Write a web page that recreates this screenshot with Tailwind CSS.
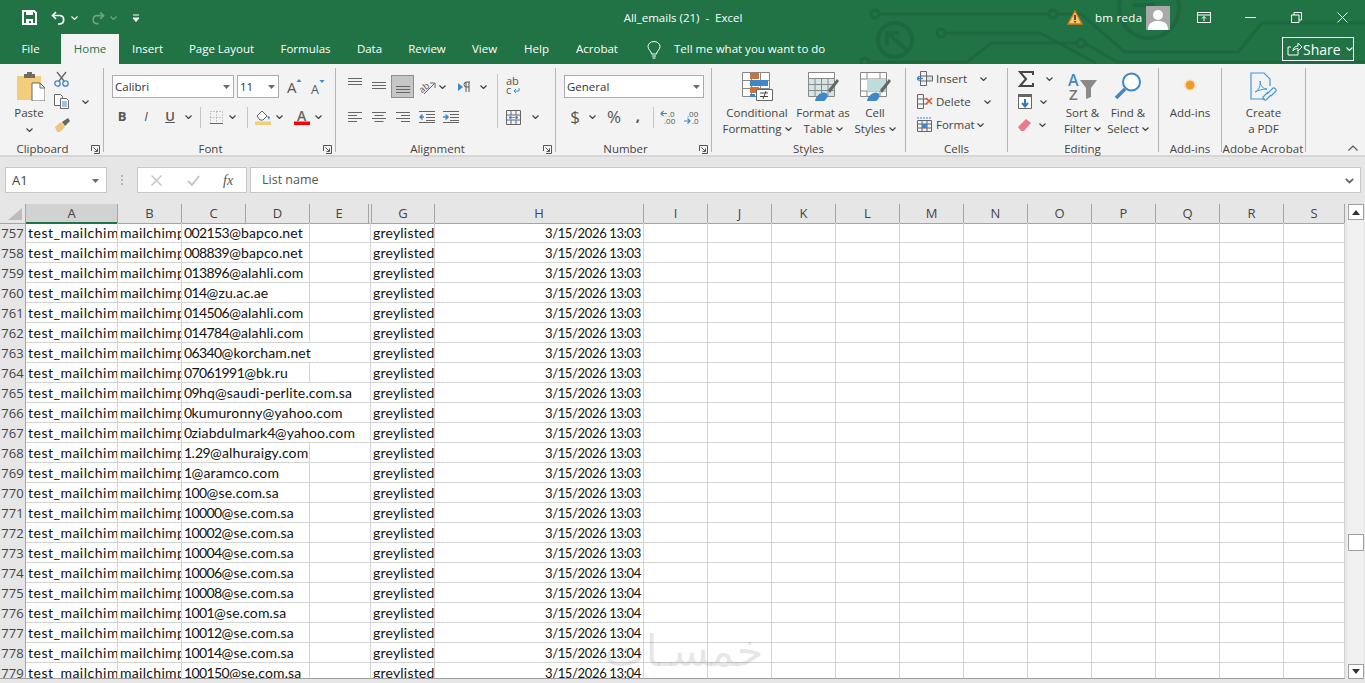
<!DOCTYPE html>
<html lang="en">
<head>
  <meta charset="UTF-8" />
  <title>All_emails (21) - Excel</title>
  <script src="https://cdn.jsdelivr.net/npm/@tailwindcss/browser@4"></script>
</head>
<body class="w-[1365px] h-[683px] overflow-hidden bg-[#e6e6e6] font-['Open_Sans',sans-serif] text-[11.5px] text-[#444]">

  <svg class="hidden">
    <symbol id="chev" viewBox="0 0 7 4"><path d="M.5.5l3 3 3-3" fill="none" stroke="currentColor" stroke-width="1.2"/></symbol>
    <symbol id="launch" viewBox="0 0 9 9"><path d="M.5 6V.5h8v8H3M2.5 2.5l4 4M6.5 3.5v3h-3" fill="none" stroke="#555"/></symbol>
    <symbol id="drop" viewBox="0 0 7 4"><path d="M0 0h7L3.5 4z" fill="#6a6a6a"/></symbol>
  </svg>

  <!-- titlebar + tabs -->
  <div class="relative h-[64px] bg-[#217346] text-white">
    <svg class="absolute left-0 top-0" width="1365" height="64" fill="none" stroke="#1d6840" stroke-width="3">
      <circle cx="875" cy="14" r="4"/><path d="M879 14h170"/><circle cx="1053" cy="14" r="4"/>
      <path d="M1057 14h24l38 33 6 5h113l24-29h103"/>
      <circle cx="895" cy="40" r="17" stroke-width="4"/><path d="M906 50L888 33M887 45V33h12" stroke-width="4"/>
      <circle cx="941" cy="33" r="4"/><path d="M945 33h95l56 30"/>
      <circle cx="865" cy="62" r="4"/><path d="M869 62h98l24-19h86"/><circle cx="1081" cy="43" r="4"/>
      <path d="M1085 43l32 19h248"/>
      <circle cx="1149" cy="8" r="30" stroke-width="4"/><path d="M1133 5h22" stroke-width="4"/>
    </svg>

    <div class="relative grid grid-cols-[553px_260px_552px] h-[35px] items-center">
      <div class="flex items-center h-full">
        <span class="w-[22px]"></span>
        <svg class="w-[15px] h-[15px]" viewBox="0 0 15 15"><path d="M1 1h11l2 2v11H1z" fill="none" stroke="#fff" stroke-width="2"/><path d="M4 1h7v4H4zM4 9h7v5H9v-3H7v3H4z" fill="#fff"/></svg>
        <svg class="ml-[14px] w-[16px] h-[14px]" viewBox="0 0 16 14"><path d="M5 1L1.5 4.5 5 8M2 4.5h7a4.3 4.3 0 010 8.5H7" fill="none" stroke="#fff" stroke-width="1.7"/></svg>
        <svg class="ml-[4px] w-[7px] h-[4px]"><use href="#chev"/></svg>
        <svg class="ml-[12px] w-[15px] h-[14px]" viewBox="0 0 16 14"><path d="M11 1l3.500 3.500L11 8M14 4.5H7a4.3 4.3 0 000 8.5h2" fill="none" stroke="#6da488" stroke-width="1.7"/></svg>
        <svg class="ml-[5px] w-[7px] h-[4px] text-[#6da488]"><use href="#chev"/></svg>
        <svg class="ml-[15px] w-[8px] h-[8px]" viewBox="0 0 8 8"><path d="M1 1h6M1 4h6L4 7.5z" fill="#fff" stroke="#fff"/></svg>
      </div>
      <div class="text-center whitespace-pre">All_emails (21)  -  Excel</div>
      <div class="flex items-center h-full">
        <svg class="ml-[254px] w-[16px] h-[15px]" viewBox="0 0 16 15"><path d="M8 1l7 13H1z" fill="#f6c667" stroke="#d9761c" stroke-width="1.3"/><path d="M7.2 5h1.6v5H7.2zM7.2 11h1.6v1.5H7.2z" fill="#333"/></svg>
        <span class="ml-[12px] w-[51px] tracking-[.3px]">bm reda</span>
        <svg class="w-[24px] h-[24px]" viewBox="0 0 24 24"><path d="M0 0h24v24H0z" fill="#a9a9a9"/><circle cx="12" cy="9" r="5" fill="#fff"/><path d="M2 24c0-7 4-9 10-9s10 2 10 9z" fill="#fff"/></svg>
        <svg class="ml-[27px] w-[14px] h-[11px]" viewBox="0 0 14 11"><path d="M.5.5h13v10H.5zM.5 3h13M7 9V4.5M5 6.5L7 4.5l2 2" fill="none" stroke="#fff"/></svg>
        <span class="ml-[34px] w-[11px] h-px bg-white"></span>
        <svg class="ml-[35px] w-[11px] h-[11px]" viewBox="0 0 11 11"><path d="M.5 3h7.5v7.5H.5zM3 3V.5h7.5V8H8" fill="none" stroke="#fff"/></svg>
        <svg class="ml-[35px] w-[11px] h-[11px]" viewBox="0 0 11 11"><path d="M.5.5l10 10M10.5.5l-10 10" fill="none" stroke="#fff"/></svg>
      </div>
    </div>

    <div class="relative flex h-[29px] items-center">
      <div class="w-[61px] text-center -mt-[1px]">File</div>
      <div class="w-[58px] h-[30px] -mt-[1px] bg-[#f3f3f3] text-[#217346] flex items-center justify-center">Home</div>
      <div class="w-[57px] text-center -mt-[1px]">Insert</div>
      <div class="w-[91px] text-center -mt-[1px]">Page Layout</div>
      <div class="w-[77px] text-center -mt-[1px]">Formulas</div>
      <div class="w-[51px] text-center -mt-[1px]">Data</div>
      <div class="w-[64px] text-center -mt-[1px]">Review</div>
      <div class="w-[51px] text-center -mt-[1px]">View</div>
      <div class="w-[53px] text-center -mt-[1px]">Help</div>
      <div class="w-[68px] text-center -mt-[1px]">Acrobat</div>
      <svg class="ml-[16px] w-[14px] h-[18px]" viewBox="0 0 14 18"><path d="M4.5 13c0-3-3.500-4-3.500-7.5a6 5 0 0112 0C13 9 9.500 10 9.500 13zM5 15h4M5.5 17h3" fill="none" stroke="#fff"/></svg>
      <span class="ml-[13px] w-[600px] -mt-[1px]">Tell me what you want to do</span>
      <div class="absolute left-[1282px] top-[2px] w-[72px] h-[24px] border border-white flex items-center pl-[4px] text-[14px]">
        <svg class="flex-none w-[15px] h-[14px]" viewBox="0 0 15 14"><path d="M11 8v5H1V5h3M6 9c0-3 2-5 5-5V1l4 4-4 4V6.5C9 6.5 7 7 6 9z" fill="none" stroke="#fff"/></svg>
        <span class="ml-[1px]">Share</span>
        <svg class="ml-[5px] w-[7px] h-[4px]"><use href="#chev"/></svg>
      </div>
    </div>
  </div>

  <!-- ribbon -->
  <div class="flex h-[93px] pt-[4px] bg-[#f3f3f3] border-b-2 border-[#d6d6d6]">

    <!-- clipboard -->
    <div class="w-[104px] h-[84px] flex-none border-r border-[#b4b4b4]">
      <div class="flex h-[74px]">
        <div class="ml-[4px] w-[50px] flex flex-col items-center">
          <div class="h-[37px] pt-[4px] pl-[4px]">
            <svg width="28" height="29" viewBox="0 0 28 29"><path d="M0 4h24v24H0z" fill="#f2cd7a"/><path d="M7 2h3V0h5v2h3v4H7z" fill="#6b6b6b"/><path d="M15 11h8l5 5v13H15z" fill="#fff" stroke="#666"/><path d="M23 11v5h5" fill="none" stroke="#666"/></svg>
          </div>
          <div class="leading-[16px]">Paste</div>
          <svg class="mt-[7px] w-[7px] h-[4px]"><use href="#chev"/></svg>
        </div>
        <div class="-mt-[1px]">
          <div class="h-[23px] flex items-center">
            <svg width="15" height="16" viewBox="0 0 15 16"><path d="M3 1l7 9M12 1L5 10" stroke="#666" stroke-width="1.3"/><circle cx="3.5" cy="12.5" r="2.7" fill="none" stroke="#3f87c7" stroke-width="1.3"/><circle cx="11.5" cy="12.5" r="2.7" fill="none" stroke="#3f87c7" stroke-width="1.3"/></svg>
          </div>
          <div class="h-[23px] flex items-center">
            <svg width="15" height="15" viewBox="0 0 15 15"><path d="M.5.5h6l2 2v9h-8z" fill="#fff" stroke="#666"/><path d="M6.5 4.5h6l2 2v8h-8z" fill="#fff" stroke="#666"/><path d="M8 8h5M8 10h5M8 12h5" stroke="#3f87c7"/></svg>
            <svg class="ml-[13px] w-[7px] h-[4px]"><use href="#chev"/></svg>
          </div>
          <div class="h-[23px] flex items-center">
            <svg width="17" height="14" viewBox="0 0 17 14"><path d="M1 9l6-5 4 5-5 5H3z" fill="#f0c27b"/><path d="M8 4l6-4 2 3-5 5z" fill="#666"/></svg>
          </div>
        </div>
      </div>
      <div class="relative h-[14px] leading-[13px] text-center pr-[18px]">Clipboard<svg class="absolute right-[3px] top-[3px] w-[9px] h-[9px]"><use href="#launch"/></svg></div>
    </div>

    <!-- font -->
    <div class="w-[232px] h-[84px] flex-none border-r border-[#b4b4b4]">
      <div class="h-[74px] pl-[8px] pt-[7px]">
        <div class="flex items-center h-[23px]">
          <div class="w-[122px] h-[23px] bg-white border border-[#ababab] flex items-center justify-between pl-[2px] pr-[3px] text-[#333]">Calibri<svg class="w-[7px] h-[4px]"><use href="#drop"/></svg></div>
          <div class="ml-[3px] w-[42px] h-[23px] bg-white border border-[#ababab] flex items-center justify-between pl-[2px] pr-[3px] text-[#333]">11<svg class="w-[7px] h-[4px]"><use href="#drop"/></svg></div>
          <svg class="ml-[8px] w-[15px] h-[15px] overflow-visible" viewBox="0 0 15 15"><text x="0" y="14" font-family="Open Sans" font-size="15" fill="#555">A</text><path d="M9.5 3l2.500-3 2.500 3z" fill="#3f87c7"/></svg>
          <svg class="ml-[8px] w-[15px] h-[14px] overflow-visible" viewBox="0 0 15 14"><text x="1" y="14" font-family="Open Sans" font-size="12.5" fill="#555">A</text><path d="M9.5 0h5L12 3z" fill="#3f87c7"/></svg>
        </div>
        <div class="flex items-center h-[24px] mt-[7px] -ml-[2px]">
          <div class="w-[24px] text-center font-bold text-[13px] text-[#555]">B</div>
          <div class="w-[24px] text-center italic text-[13px] text-[#555]">I</div>
          <div class="w-[24px] text-center font-semibold text-[13px] text-[#555] underline">U</div>
          <div class="w-[12px] flex justify-center"><svg class="w-[7px] h-[4px]"><use href="#chev"/></svg></div>
          <div class="w-[13px] flex justify-center"><span class="w-px h-[21px] bg-[#c6c6c6]"></span></div>
          <div class="w-[18px] flex justify-center"><svg width="13" height="13" viewBox="0 0 13 13"><path d="M.5.5h12v12H.5zM6.5.5v12M.5 6.5h12" fill="none" stroke="#999" stroke-dasharray="1 2"/><path d="M0 12.5h13" stroke="#666"/></svg></div>
          <div class="w-[15px] flex justify-center"><svg class="w-[7px] h-[4px]"><use href="#chev"/></svg></div>
          <div class="w-[14px] flex justify-center"><span class="w-px h-[21px] bg-[#c6c6c6]"></span></div>
          <div class="w-[18px] flex justify-center"><svg width="16" height="15" viewBox="0 0 16 15"><path d="M2 6l5-5 5 5-4 4H5z" fill="#fff" stroke="#666"/><path d="M12 6l3 1-1 3z" fill="#3f87c7"/><path d="M0 11.5h16V15H0z" fill="#f0cf7a"/></svg></div>
          <div class="w-[14px] flex justify-center"><svg class="w-[7px] h-[4px]"><use href="#chev"/></svg></div>
          <div class="ml-[6px] w-[20px] flex justify-center"><svg class="overflow-visible" width="16" height="15" viewBox="0 0 16 15"><text x="3" y="11" font-family="Open Sans" font-weight="600" font-size="14" fill="#666">A</text><path d="M0 11.5h16V15H0z" fill="#f00"/></svg></div>
          <div class="w-[13px] flex justify-center"><svg class="w-[7px] h-[4px]"><use href="#chev"/></svg></div>
        </div>
      </div>
      <div class="relative h-[14px] leading-[13px] text-center pr-[18px]">Font<svg class="absolute right-[3px] top-[3px] w-[9px] h-[9px]"><use href="#launch"/></svg></div>
    </div>

    <!-- alignment -->
    <div class="w-[220px] h-[84px] flex-none border-r border-[#b4b4b4]">
      <div class="h-[74px] pl-[7px] pt-[7px] flex">
        <div class="w-[150px]">
          <div class="flex items-center h-[23px]">
            <div class="w-[24px] h-full pt-[3px] flex justify-center"><svg width="14" height="8"><path d="M0 .5h14M0 3.5h14M0 6.5h14" stroke="#666"/></svg></div>
            <div class="w-[24px] h-full pt-[7px] flex justify-center"><svg width="14" height="8"><path d="M0 .5h14M0 3.5h14M0 6.5h14" stroke="#666"/></svg></div>
            <div class="w-[23px] h-[23px] bg-[#c6c6c6] border border-[#8f8f8f] flex items-end justify-center pb-[3px]"><svg width="14" height="8"><path d="M0 .5h14M0 3.5h14M0 6.5h14" stroke="#666"/></svg></div>
            <div class="ml-[1px] w-[24px] flex justify-center"><svg class="overflow-visible" width="18" height="16" viewBox="0 0 18 16"><text x="1" y="12" transform="rotate(-40 6 9)" font-family="Open Sans" font-size="9" fill="#555">ab</text><path d="M6 15L16 5M12 4h5v5" fill="none" stroke="#666"/></svg></div>
            <div class="w-[13px] -ml-[3px] flex justify-center"><svg class="w-[7px] h-[4px]"><use href="#chev"/></svg></div>
            <div class="ml-[6px] w-[20px] flex justify-center"><svg width="14" height="12" viewBox="0 0 14 12"><path d="M0 2l5 4-5 4z" fill="#3f87c7"/><path d="M8 1v10M11 1v10M12 1H8.5a2.5 2.5 0 000 5H11" fill="none" stroke="#555"/></svg></div>
            <div class="ml-[2px] w-[12px] flex justify-center"><svg class="w-[7px] h-[4px]"><use href="#chev"/></svg></div>
          </div>
          <div class="flex items-center h-[24px] mt-[7px]">
            <div class="w-[24px] flex justify-center"><svg width="14" height="10"><path d="M0 .5h14M0 3.5h9M0 6.5h14M0 9.5h9" stroke="#666"/></svg></div>
            <div class="w-[24px] flex justify-center"><svg width="14" height="10"><path d="M0 .5h14M2.5 3.5h9M0 6.5h14M2.5 9.5h9" stroke="#666"/></svg></div>
            <div class="w-[24px] flex justify-center"><svg width="14" height="10"><path d="M0 .5h14M5 3.5h9M0 6.5h14M5 9.5h9" stroke="#666"/></svg></div>
            <div class="w-[24px] flex justify-center"><svg width="16" height="12"><path d="M0 .5h16M7 3.5h9M7 6.5h9M0 11.5h16M7 9.5h9" stroke="#666"/><path d="M5 6H1M3.5 3.5L1 6l2.500 2.500" fill="none" stroke="#3f87c7" stroke-width="1.5"/></svg></div>
            <div class="w-[24px] flex justify-center"><svg width="16" height="12"><path d="M0 .5h16M7 3.5h9M7 6.5h9M0 11.5h16M7 9.5h9" stroke="#666"/><path d="M0 6h4.500M2.5 3.5L5 6 2.5 8.5" fill="none" stroke="#3f87c7" stroke-width="1.5"/></svg></div>
          </div>
        </div>
        <span class="mt-[-1px] w-px h-[54px] bg-[#c6c6c6] ml-[4px]"></span>
        <div class="ml-[8px]">
          <div class="h-[23px] flex items-center -mt-[1px]"><svg class="overflow-visible" width="16" height="18" viewBox="0 0 16 18"><text x="0" y="8" font-family="Open Sans" font-size="11" fill="#555">ab</text><text x="0" y="17" font-family="Open Sans" font-size="11" fill="#555">c</text><path d="M13 11v3H8M10 12l-2 2 2 2" fill="none" stroke="#3f87c7"/></svg></div>
          <div class="h-[24px] flex items-center mt-[8px]">
            <svg width="15" height="15" viewBox="0 0 15 15"><path d="M.5.5h14v14H.5zM.5 5h14M.5 10h14M5 .5V5M10 .5V5M5 10v4.500M10 10v4.500" fill="none" stroke="#666"/><path d="M3 7.5h9M3 7.5l2-1.500v3zM12 7.5l-2-1.500v3z" fill="#3f87c7" stroke="#3f87c7" stroke-width=".8"/></svg>
            <svg class="ml-[11px] w-[7px] h-[4px]"><use href="#chev"/></svg>
          </div>
        </div>
      </div>
      <div class="relative h-[14px] leading-[13px] text-center -ml-[16px]">Alignment<svg class="absolute right-[3px] top-[3px] w-[9px] h-[9px]"><use href="#launch"/></svg></div>
    </div>

    <!-- number -->
    <div class="w-[156px] h-[84px] flex-none border-r border-[#b4b4b4]">
      <div class="h-[74px] pl-[8px] pt-[7px]">
        <div class="w-[140px] h-[23px] bg-white border border-[#ababab] flex items-center justify-between pl-[2px] pr-[3px] text-[#333]">General<svg class="w-[7px] h-[4px]"><use href="#drop"/></svg></div>
        <div class="flex items-center h-[24px] mt-[7px]">
          <div class="w-[22px] text-center text-[17px] text-[#555]">$</div>
          <div class="w-[12px] flex justify-center"><svg class="w-[7px] h-[4px]"><use href="#chev"/></svg></div>
          <div class="w-[32px] text-center text-[17px] text-[#555]">%</div>
          <div class="w-[16px] text-center text-[15px] font-bold text-[#555] -mt-[4px]">,</div>
          <div class="w-[14px] flex justify-center"><span class="w-px h-[21px] bg-[#c6c6c6]"></span></div>
          <div class="w-[18px] flex justify-center"><svg class="overflow-visible" width="16" height="15" viewBox="0 0 16 15"><path d="M0 3.5h6M2.5 1L0 3.5 2.5 6" fill="none" stroke="#3f87c7" stroke-width="1.2"/><text x="7" y="7" font-family="Open Sans" font-size="8" fill="#555">.0</text><text x="3" y="14" font-family="Open Sans" font-size="8" fill="#555">.00</text></svg></div>
          <div class="ml-[4px] w-[20px] flex justify-center"><svg class="overflow-visible" width="16" height="15" viewBox="0 0 16 15"><text x="3" y="7" font-family="Open Sans" font-size="8" fill="#555">.00</text><text x="8" y="14" font-family="Open Sans" font-size="8" fill="#555">.0</text><path d="M0 11h6M3.5 8.5L6 11l-2.500 2.500" fill="none" stroke="#3f87c7" stroke-width="1.2"/></svg></div>
        </div>
      </div>
      <div class="relative h-[14px] leading-[13px] text-center -ml-[16px]">Number<svg class="absolute right-[3px] top-[3px] w-[9px] h-[9px]"><use href="#launch"/></svg></div>
    </div>

    <!-- styles -->
    <div class="w-[194px] h-[84px] flex-none border-r border-[#b4b4b4]">
      <div class="h-[74px] pl-[8px] flex text-center leading-[16px]">
        <div class="w-[74px] flex flex-col items-center">
          <div class="h-[37px] pt-[4px]"><svg width="31" height="29" viewBox="0 0 31 29"><path d="M.5.5h27v24H.5zM9.5.5v24M18.5.5v24M.5 8.5h27M.5 16.5h27" fill="#fff" stroke="#888"/><path d="M8 1h9v6H8z" fill="#c8743c"/><path d="M8 8h18v6H8z" fill="#3f87c7"/><path d="M8 15h9v6H8z" fill="#c8743c"/><path d="M8 22h5v3H8z" fill="#3f87c7"/><path d="M14.5 17.5h16v11h-16z" fill="#fff" stroke="#666"/><path d="M18 21h8M18 24.5h8M24 19l-3 8" stroke="#444"/></svg></div>
          <div>Conditional</div>
          <div class="flex items-center whitespace-nowrap">Formatting<svg class="ml-[3px] w-[7px] h-[4px]"><use href="#chev"/></svg></div>
        </div>
        <div class="w-[58px] flex flex-col items-center whitespace-nowrap">
          <div class="h-[37px] pt-[4px]"><svg width="31" height="29" viewBox="0 0 31 29"><path d="M.5.5h26v24H.5zM.5 6.5h26M.5 12.5h26M.5 18.5h26M7 .5v24M13.5.5v24M20 .5v24" fill="#d3e5e5" stroke="#888"/><path d="M.5.5h26v6H.5z" fill="#fff" stroke="#888"/><path d="M20 18L29 7l2 2-9 12z" fill="#666"/><path d="M7 29c1-6 7-10 11-8 3 2 1 6-2 8z" fill="#3f87c7"/></svg></div>
          <div>Format as</div>
          <div class="flex items-center">Table<svg class="ml-[3px] w-[7px] h-[4px]"><use href="#chev"/></svg></div>
        </div>
        <div class="w-[46px] flex flex-col items-center whitespace-nowrap">
          <div class="h-[37px] pt-[4px]"><svg width="31" height="29" viewBox="0 0 31 29"><path d="M.5.5h26v24H.5zM.5 7h26M.5 19h26M7 .5V7M7 19v5.500M20 .5V7M20 19v5.500" fill="#fff" stroke="#888"/><path d="M7 7h19v12H7z" fill="#bedcdc"/><path d="M20 18L29 7l2 2-9 12z" fill="#666"/><path d="M7 29c1-6 7-10 11-8 3 2 1 6-2 8z" fill="#3f87c7"/></svg></div>
          <div>Cell</div>
          <div class="flex items-center">Styles<svg class="ml-[3px] w-[7px] h-[4px]"><use href="#chev"/></svg></div>
        </div>
      </div>
      <div class="h-[14px] leading-[13px] text-center">Styles</div>
    </div>

    <!-- cells -->
    <div class="w-[102px] h-[84px] flex-none border-r border-[#b4b4b4]">
      <div class="h-[75px] pl-[11px] -mt-[1px]">
        <div class="h-[23px] flex items-center">
          <svg class="w-[19px] flex-none" height="15" viewBox="0 0 19 15"><path d="M3.5.5h6v14h-6zM3.5 5h6M3.5 10h6" fill="none" stroke="#666"/><path d="M9.5 5h6v5h-6z" fill="#cfe0ea" stroke="#666"/><path d="M0 7.5h6M0 7.5L2.5 5M0 7.5L2.5 10" fill="none" stroke="#3f87c7" stroke-width="1.3"/></svg>
          <span class="w-[44px]">Insert</span><svg class="w-[7px] h-[4px]"><use href="#chev"/></svg>
        </div>
        <div class="h-[23px] flex items-center">
          <svg class="w-[19px] flex-none" height="15" viewBox="0 0 19 15"><path d="M.5.5h6v14h-6zM.5 5h6M.5 10h6M6.5 5h4M6.5 10h4" fill="none" stroke="#666"/><path d="M9 4l6 6M15 4l-6 6" stroke="#d9532c" stroke-width="1.5"/></svg>
          <span class="w-[48px]">Delete</span><svg class="w-[7px] h-[4px]"><use href="#chev"/></svg>
        </div>
        <div class="h-[23px] flex items-center">
          <svg class="w-[19px] flex-none" height="15" viewBox="0 0 19 15"><path d="M.5 3.5h14v11H.5zM.5 7h14M.5 11h14M5 3.5v11M10 3.5v11" fill="none" stroke="#666"/><path d="M5 7h5v4H5z" fill="#3f87c7"/><path d="M0 1h15" stroke="#3f87c7" stroke-dasharray="2 1"/></svg>
          <span class="w-[41px]">Format</span><svg class="w-[7px] h-[4px]"><use href="#chev"/></svg>
        </div>
      </div>
      <div class="h-[14px] leading-[13px] text-center">Cells</div>
    </div>

    <!-- editing -->
    <div class="w-[151px] h-[84px] flex-none border-r border-[#b4b4b4]">
      <div class="h-[74px] flex leading-[16px] text-center">
        <div class="w-[52px] pl-[10px] -mt-[1px]">
          <div class="h-[23px] flex items-center">
            <svg class="flex-none" width="16" height="16" viewBox="0 0 16 16"><path d="M15 4V1H2l6 7-6 7h13v-3" fill="none" stroke="#444" stroke-width="2"/></svg>
            <svg class="ml-[12px] w-[7px] h-[4px]"><use href="#chev"/></svg>
          </div>
          <div class="h-[23px] flex items-center">
            <svg class="flex-none" width="14" height="15" viewBox="0 0 14 15"><path d="M.5.5h13v14H.5z" fill="#fff" stroke="#666"/><path d="M0 0h14v3H0z" fill="#666"/><path d="M7 5v7M4 9l3 3.500L10 9" fill="none" stroke="#2f7cc0" stroke-width="2"/></svg>
            <svg class="ml-[8px] w-[7px] h-[4px]"><use href="#chev"/></svg>
          </div>
          <div class="h-[23px] flex items-center">
            <svg class="flex-none" width="13" height="12" viewBox="0 0 13 12"><path d="M0 8l8-8 5 4-7 8H3z" fill="#e97b8b"/></svg>
            <svg class="ml-[8px] w-[7px] h-[4px]"><use href="#chev"/></svg>
          </div>
        </div>
        <div class="w-[45px] flex flex-col items-center whitespace-nowrap">
          <div class="h-[37px] pt-[4px]"><svg class="overflow-visible" width="29" height="30" viewBox="0 0 29 30"><text x="0" y="14" font-family="Open Sans" font-weight="600" font-size="16" fill="#3f87c7">A</text><text x="1" y="28" font-family="Open Sans" font-weight="600" font-size="15" fill="#777">Z</text><path d="M12 8h17l-6 8v9l-5 2V16z" fill="#8a8a8a"/></svg></div>
          <div>Sort &amp;</div>
          <div class="flex items-center">Filter<svg class="ml-[3px] w-[7px] h-[4px]"><use href="#chev"/></svg></div>
        </div>
        <div class="w-[46px] flex flex-col items-center whitespace-nowrap">
          <div class="h-[37px] pt-[4px]"><svg width="28" height="28" viewBox="0 0 28 28"><circle cx="17.5" cy="10" r="8.5" fill="#fff" stroke="#3f87c7" stroke-width="2"/><path d="M11 17L2 26" stroke="#3f87c7" stroke-width="3.5"/></svg></div>
          <div>Find &amp;</div>
          <div class="flex items-center">Select<svg class="ml-[3px] w-[7px] h-[4px]"><use href="#chev"/></svg></div>
        </div>
      </div>
      <div class="h-[14px] leading-[13px] text-center -ml-[1px]">Editing</div>
    </div>

    <!-- add-ins -->
    <div class="w-[63px] h-[84px] flex-none border-r border-[#b4b4b4]">
      <div class="h-[74px] flex flex-col items-center leading-[16px]">
        <div class="h-[37px] pt-[10px]"><svg width="14" height="14"><circle cx="7" cy="7" r="6.5" fill="#fbe9c9"/><circle cx="7" cy="7" r="4.5" fill="#ec9a34"/></svg></div>
        <div class="whitespace-nowrap">Add-ins</div>
      </div>
      <div class="h-[14px] leading-[13px] text-center">Add-ins</div>
    </div>

    <!-- acrobat -->
    <div class="w-[84px] h-[84px] flex-none border-r border-[#b4b4b4]">
      <div class="h-[74px] flex flex-col items-center leading-[16px]">
        <div class="h-[37px] pt-[4px]"><svg width="27" height="30" viewBox="0 0 27 30"><path d="M15 27H1V1h13l6 6v7" fill="none" stroke="#3f9ad6" stroke-width="1.2"/><path d="M5 20c4-2 6-7 5-11 0 5 4 8 7 8-4 0-8 1-12 3z" fill="none" stroke="#3f9ad6"/><path d="M17 22l6-6a2.5 2.5 0 013 3l-5 5M21 23l-5 5a2.5 2.5 0 01-3-3l5-5" fill="none" stroke="#3f9ad6" stroke-width="1.2"/></svg></div>
        <div>Create</div>
        <div>a PDF</div>
      </div>
      <div class="h-[14px] leading-[13px] text-center whitespace-nowrap tracking-[.1px] -ml-[1px]">Adobe Acrobat</div>
    </div>

    <div class="flex-1 h-[84px] flex items-end justify-end pr-[7px] pb-[1px]">
      <svg width="10" height="6" viewBox="0 0 10 6"><path d="M.5 5.5L5 1l4.500 4.500" fill="none" stroke="#555" stroke-width="1.2"/></svg>
    </div>
  </div>

  <!-- formula bar -->
  <div class="flex h-[47px] pt-[10px] pl-[5px] items-start">
    <div class="w-[102px] h-[26px] pt-[1px] bg-white border border-[#c6c6c6] flex items-center justify-between pl-[6px] pr-[7px] text-[13px]">A1<svg class="w-[7px] h-[4px]"><use href="#drop"/></svg></div>
    <div class="w-[30px] h-[26px] flex flex-col items-center justify-center gap-[2px]">
      <span class="w-[2px] h-[2px] bg-[#b4b4b4]"></span><span class="w-[2px] h-[2px] bg-[#b4b4b4]"></span><span class="w-[2px] h-[2px] bg-[#b4b4b4]"></span>
    </div>
    <div class="w-[110px] h-[26px] bg-white border border-[#c6c6c6] flex items-center">
      <svg class="ml-[13px] w-[11px] h-[11px]" viewBox="0 0 11 11"><path d="M.5.5l10 10M10.5.5l-10 10" stroke="#c6c6c6" stroke-width="1.5"/></svg>
      <svg class="ml-[25px] w-[13px] h-[11px]" viewBox="0 0 13 11"><path d="M1 6l4 4 7-9" fill="none" stroke="#c6c6c6" stroke-width="2"/></svg>
      <span class="ml-[23px] font-['Liberation_Serif',serif] italic text-[14px] text-[#555]">fx</span>
    </div>
    <div class="ml-[3px] w-[1111px] h-[26px] pt-[1px] bg-white border border-[#c6c6c6] flex items-center justify-between pl-[11px] pr-[6px] text-[12.5px] text-[#555]">
      List name
      <svg width="9" height="6" viewBox="0 0 9 6"><path d="M.8.8l3.700 3.700L8.200.8" fill="none" stroke="#666" stroke-width="1.8"/></svg>
    </div>
  </div>

  <!-- sheet -->
  <div class="relative flex h-[479px] items-start">
    <div class="w-[1345px] flex-none">
      <div id="colHead" class="grid grid-cols-[26px_92px_64px_64px_64px_61px_64px_209px_repeat(10,64px)_61px] h-[19px] text-[13px] leading-[18px] text-center text-[#444]"></div>
      <div id="rows" class="h-[456px] overflow-hidden bg-white border-b border-[#9f9f9f] font-['Lato',sans-serif] text-[14px] leading-[20px] text-[#111]"></div>
    </div>
    <div class="ml-[2px] w-[17px] h-[475px] bg-[#f0f0f0] flex flex-col items-center">
      <div class="w-[16px] h-[16px] bg-white border border-[#9f9f9f] flex items-center justify-center"><svg width="8" height="5"><path d="M0 5h8L4 0z" fill="#333"/></svg></div>
      <div class="flex-1 pt-[314px]"><div class="w-[16px] h-[17px] bg-white border border-[#9f9f9f]"></div></div>
      <div class="w-[16px] h-[15px] bg-white border border-[#9f9f9f] flex items-center justify-center"><svg width="8" height="5"><path d="M0 0h8L4 5z" fill="#333"/></svg></div>
    </div>
    <!-- watermark -->
    <div class="absolute left-[604px] top-[422px] font-['DejaVu_Sans',sans-serif] text-[44px] leading-[50px] whitespace-nowrap text-black/10 pointer-events-none" dir="rtl">خمسـات</div>
  </div>

  <script>
    const emails = [
      "002153@bapco.net", "008839@bapco.net", "013896@alahli.com", "014@zu.ac.ae", "014506@alahli.com",
      "014784@alahli.com", "06340@korcham.net", "07061991@bk.ru", "09hq@saudi-perlite.com.sa",
      "0kumuronny@yahoo.com", "0ziabdulmark4@yahoo.com", "1.29@alhuraigy.com", "1@aramco.com",
      "100@se.com.sa", "10000@se.com.sa", "10002@se.com.sa", "10004@se.com.sa", "10006@se.com.sa",
      "10008@se.com.sa", "1001@se.com.sa", "10012@se.com.sa", "10014@se.com.sa", "100150@se.com.sa"
    ];
    const wideRows = ["06340@korcham.net", "09hq@saudi-perlite.com.sa", "0kumuronny@yahoo.com", "0ziabdulmark4@yahoo.com"];

    const line = "border-r border-[#d4d4d4]";
    const clip = "overflow-hidden whitespace-nowrap pl-[2px] border-r border-[#d4d4d4]";

    // column letters, F is hidden
    let head = '<div class="relative border-r border-b border-[#a5a5a5]"><svg class="absolute left-[8px] top-[4px]" width="14" height="12"><path d="M14 0v12H0z" fill="#bdbdbd"/></svg></div>';
    head += '<div class="bg-[#d2d2d2] border-r border-b-2 border-r-[#a5a5a5] border-b-[#217346]">A</div>';
    ["B", "C", "D"].forEach(c => {
      head += `<div class="border-r border-b border-[#a5a5a5]">${c}</div>`;
    });
    head += '<div class="border-b border-[#a5a5a5]"><div class="w-[59px] h-full border-r border-[#a5a5a5]">E</div></div>';
    head += '<div class="border-l border-r border-b border-[#a5a5a5]">G</div>';
    ["H", "I", "J", "K", "L", "M", "N", "O", "P", "Q", "R", "S"].forEach(c => {
      head += `<div class="border-r border-b border-[#a5a5a5]">${c}</div>`;
    });
    document.getElementById("colHead").innerHTML = head;

    // Lato digits run wider than the sheet's font, so digit runs get pulled in
    const tightDigits = s => s.replace(/\d+/g, m => `<span class="tracking-[-.6px]">${m}</span>`);

    let html = "";
    emails.forEach((mail, i) => {
      const span = wideRows.includes(mail) ? "col-span-3" : "col-span-2";
      const stamp = i < 17 ? "3/15/2026 13:03" : "3/15/2026 13:04";
      let row = `<div class="grid grid-cols-[26px_92px_64px_64px_64px_61px_64px_209px_repeat(10,64px)_61px] h-[20px] border-b border-[#d4d4d4]">`;
      row += `<div class="bg-[#e6e6e6] border-r border-[#a5a5a5] text-center font-['Open_Sans',sans-serif] text-[13px] text-[#444]">${757 + i}</div>`;
      row += `<div class="${clip} tracking-[.5px]">test_mailchimp</div><div class="${clip} tracking-[.3px]">mailchimp</div>`;
      row += `<div class="${span} ${clip} tracking-[.15px]">${tightDigits(mail)}</div>`;
      if (span === "col-span-2") row += `<div class="${line}"></div>`;
      row += `<div class="${clip} tracking-[.2px]">greylisted</div>`;
      row += `<div class="${line} text-right pr-[2px] text-[13px] tracking-[-.35px]">${stamp}</div>`;
      for (let c = 0; c < 11; c++) row += `<div class="${line}"></div>`;
      html += row + "</div>";
    });
    document.getElementById("rows").innerHTML = html;
  </script>
</body>
</html>
